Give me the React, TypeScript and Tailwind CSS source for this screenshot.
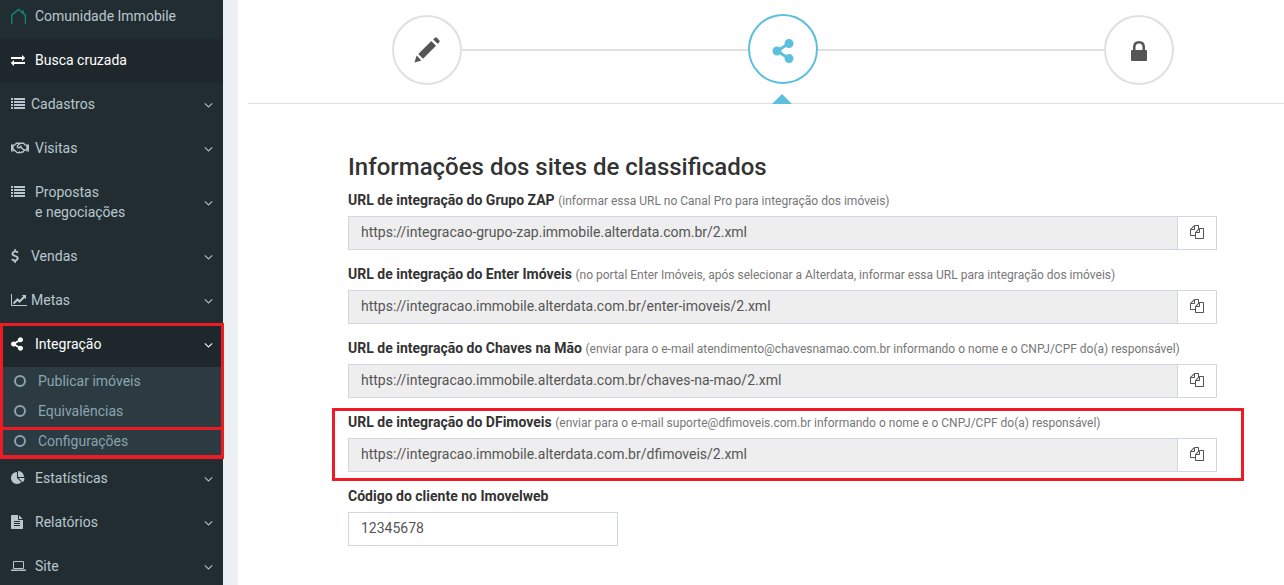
import type { ReactNode } from 'react';
import { FaRegHandshake, FaShareAlt } from 'react-icons/fa';

type GlyphProps = { d: string; w: number; className: string };

function Glyph({ d, w, className }: GlyphProps) {
  return (
    <svg viewBox={`0 0 ${w} 1792`} className={className} fill="currentColor" aria-hidden="true">
      <path d={d} />
    </svg>
  );
}

const EXCHANGE =
  'M1792 1184v192q0 13-9.5 22.5t-22.5 9.5h-1376v192q0 13-9.5 22.5t-22.5 9.5q-12 0-24-10l-319-320q-9-9-9-22 0-14 9-23l320-320q9-9 23-9 13 0 22.5 9.5t9.5 22.5v192h1376q13 0 22.5 9.5t9.5 22.5zm0-544q0 14-9 23l-320 320q-9 9-23 9-13 0-22.5-9.5t-9.5-22.5v-192h-1376q-13 0-22.5-9.5t-9.5-22.5v-192q0-13 9.5-22.5t22.5-9.5h1376v-192q0-14 9-23t23-9q12 0 24 10l319 319q9 9 9 23z';
const LIST =
  'M0 128h256v256h-256zM384 128h1408v256h-1408zM0 512h256v256h-256zM384 512h1408v256h-1408zM0 896h256v256h-256zM384 896h1408v256h-1408zM0 1280h256v256h-256zM384 1280h1408v256h-1408z';
const DOLLAR =
  'M1362 1185q0 153-99.5 263.5t-258.5 136.5v175q0 14-9 23t-23 9h-135q-13 0-22.5-9.5t-9.5-22.5v-175q-66-9-127.5-31t-101.5-44.5-74-48-46.5-37.5-17.5-18q-17-21-2-41l103-135q7-10 23-12 15-2 24 9l2 2q113 99 243 125 37 8 74 8 81 0 142.5-43t61.5-122q0-28-15-53t-33.5-42-58.5-37.5-66-32-80-32.5q-39-16-61.5-25t-61.5-26.5-62.5-31-56.5-35.5-53.5-42.5-43.5-49-35.5-58-21-66.5-8.5-78q0-138 98-242t255-134v-180q0-13 9.5-22.5t22.5-9.5h135q14 0 23 9t9 23v176q57 6 110.5 23t87 33.5 63.5 37.5 39 29 15 14q17 18 5 38l-81 146q-8 15-23 16-14 3-27-7-3-3-14.5-12t-39-26.5-58.5-32-74.5-26-85.5-11.5q-95 0-155 43t-60 111q0 26 8.5 48t29.5 41.5 39.5 33 56 31 60.5 27 70 27.5q53 20 81 31.5t76 35 75.5 42.5 62 50 53 63.5 31.5 76.5 13 94z';
const LINE_CHART =
  'M2048 1536v128h-2048v-1536h128v1408h1920zm-128-1248v435q0 21-19.5 29.5t-35.5-7.5l-121-121-633 633q-10 10-23 10t-23-10l-233-233-416 416-192-192 585-585q10-10 23-10t23 10l233 233 464-464-121-121q-16-16-7.5-35.5t29.5-19.5h435q14 0 23 9t9 23z';
const PIE =
  'M768 890l546 546q-106 108-247.5 168t-298.5 60q-209 0-385.5-103t-279.5-279.5-103-385.5 103-385.5 279.5-279.5 385.5-103v762zm187 6h773q0 157-60 298.5t-168 247.5zm709-128h-768v-768q209 0 385.5 103t279.5 279.5 103 385.5z';
const FILE =
  'M1468 476q14 14 28 36h-472v-472q22 14 36 28zm-476 164h544v1056q0 40-28 68t-68 28h-1344q-40 0-68-28t-28-68v-1600q0-40 28-68t68-28h800v544q0 40 28 68t68 28zm160 736v-64q0-14-9-23t-23-9h-704q-14 0-23 9t-9 23v64q0 14 9 23t23 9h704q14 0 23-9t9-23zm0-256v-64q0-14-9-23t-23-9h-704q-14 0-23 9t-9 23v64q0 14 9 23t23 9h704q14 0 23-9t9-23zm0-256v-64q0-14-9-23t-23-9h-704q-14 0-23 9t-9 23v64q0 14 9 23t23 9h704q14 0 23-9t9-23z';
const LAPTOP =
  'M416 1280q-66 0-113-47t-47-113v-704q0-66 47-113t113-47h1088q66 0 113 47t47 113v704q0 66-47 113t-113 47h-1088zm-32-864v704q0 13 9.5 22.5t22.5 9.5h1088q13 0 22.5-9.5t9.5-22.5v-704q0-13-9.5-22.5t-22.5-9.5h-1088q-13 0-22.5 9.5t-9.5 22.5zm1376 928h160v96q0 40-47 68t-113 28h-1600q-66 0-113-28t-47-68v-96h1760zm-720 96q16 0 16-16t-16-16h-160q-16 0-16 16t16 16h160z';
const ANGLE_DOWN =
  'M1075 736q0 13-10 23l-466 466q-10 10-23 10t-23-10l-466-466q-10-10-10-23t10-23l50-50q10-10 23-10t23 10l393 393 393-393q10-10 23-10t23 10l50 50q10 10 10 23z';
const FILES =
  'M1696 384q40 0 68 28t28 68v1216q0 40-28 68t-68 28h-960q-40 0-68-28t-28-68v-288h-544q-40 0-68-28t-28-68v-672q0-40 20-88t48-76l408-408q28-28 76-48t88-20h416q40 0 68 28t28 68v328q68-40 128-40h416zm-544 213l-299 299h299v-299zm-640-384l-299 299h299v-299zm196 647l316-316v-416h-384v416q0 40-28 68t-68 28h-416v640h512v-256q0-40 20-88t48-76zm956 804v-1152h-384v416q0 40-28 68t-68 28h-416v640h896z';

function HouseIcon() {
  return (
    <svg viewBox="0 0 16 16" className="h-4 w-4 text-[#12857a]" fill="none" stroke="currentColor" strokeWidth="1.4" aria-hidden="true">
      <path d="M0.7 15.7V7.2L7.5 1.5L14.4 7.2V15.7M12.3 5.2V2.6" />
    </svg>
  );
}

type ItemProps = {
  icon: ReactNode;
  label: ReactNode;
  wide?: boolean;
  active?: boolean;
  arrow?: boolean;
  pad?: string;
};

function MenuItem({ icon, label, wide = true, active = false, arrow = true, pad = 'pt-[11px] pb-[13px]' }: ItemProps) {
  return (
    <li>
      <a
        href="#"
        className={`flex pl-[11px] pr-2.5 ${pad} ${active ? 'bg-[#1e282c] text-white' : 'text-[#b8c7ce]'}`}
      >
        <span className={`flex h-5 shrink-0 items-center ${wide ? 'w-6' : 'w-5'}`}>{icon}</span>
        <span className="flex-1">{label}</span>
        {arrow && (
          <span className="flex items-center pt-0.5">
            <Glyph d={ANGLE_DOWN} w={1152} className="h-3.5 w-[9px]" />
          </span>
        )}
      </a>
    </li>
  );
}

function SubItem({ label }: { label: string }) {
  return (
    <li>
      <a href="#" className="flex h-[30px] items-center pb-0.5 pl-3.5 text-[#8aa4af]">
        <svg viewBox="0 0 12 12" className="mr-3 h-3 w-3" fill="none" stroke="currentColor" strokeWidth="2" aria-hidden="true">
          <circle cx="6" cy="6" r="5" />
        </svg>
        {label}
      </a>
    </li>
  );
}

function Sidebar() {
  return (
    <nav className="w-[223px] shrink-0 bg-[#222d32]">
      <ul>
        <MenuItem icon={<HouseIcon />} label="Comunidade Immobile" arrow={false} pad="pt-1.5 pb-[13px]" />
        <MenuItem icon={<Glyph d={EXCHANGE} w={1792} className="h-3.5 w-3.5" />} label="Busca cruzada" arrow={false} active />
        <MenuItem icon={<Glyph d={LIST} w={1792} className="h-3.5 w-3.5" />} label="Cadastros" wide={false} />
        <MenuItem icon={<FaRegHandshake className="h-[18px] w-[18px] shrink-0" />} label="Visitas" />
        <MenuItem
          icon={<Glyph d={LIST} w={1792} className="h-3.5 w-3.5" />}
          label={<>Propostas<br />e negociações</>}
        />
        <MenuItem icon={<Glyph d={DOLLAR} w={1792} className="-ml-[3px] h-3.5 w-3.5" />} label="Vendas" wide={false} />
        <MenuItem icon={<Glyph d={LINE_CHART} w={2048} className="h-3.5 w-4" />} label="Metas" wide={false} />
        <li className="relative">
          <ul>
            <MenuItem icon={<FaShareAlt className="h-3.5 w-3" />} label="Integração" active />
          </ul>
          <ul className="bg-[#2c3b41]">
            <SubItem label="Publicar imóveis" />
            <SubItem label="Equivalências" />
            <SubItem label="Configurações" />
          </ul>
          <div className="pointer-events-none absolute -right-px -bottom-px left-0 top-0 border-3 border-[#ed1c24]" />
          <div className="pointer-events-none absolute -right-px -bottom-0.5 left-0 h-8 border-3 border-[#ed1c24]" />
        </li>
        <MenuItem icon={<Glyph d={PIE} w={1792} className="h-3.5 w-3.5" />} label="Estatísticas" />
        <MenuItem icon={<Glyph d={FILE} w={1536} className="h-3.5 w-3" />} label="Relatórios" />
        <MenuItem icon={<Glyph d={LAPTOP} w={1920} className="h-3.5 w-[15px]" />} label="Site" pad="pt-[11px] pb-[9px]" />
      </ul>
    </nav>
  );
}

const STEP = 'flex h-[70px] w-[70px] shrink-0 items-center justify-center rounded-full border-2 bg-white';

function Steps() {
  return (
    <div className="ml-2.5 flex h-[104px] items-start border-b border-[#e0e0e0] pl-36 pr-[110px] pt-[15px]">
      <button type="button" aria-label="Dados" className={`${STEP} border-[#e0e0e0] text-[#555555]`}>
        <svg viewBox="0 0 26 26" className="h-[26px] w-[26px]" fill="currentColor" aria-hidden="true">
          <path d="M0.5 25.5L2.6 18.6L7.4 23.4ZM4.3 17L16.8 4.5Q17.3 4 17.8 4.5L21.5 8.2Q22 8.7 21.5 9.2L9 21.7ZM19.2 2.4L20.8 0.8Q21.8 -0.1 22.8 0.8L25.2 3.2Q26.1 4.2 25.2 5.2L23.6 6.8Z" />
        </svg>
      </button>
      <div className="mt-[34px] h-0.5 flex-1 bg-[#e0e0e0]" />
      <div className="relative -mt-px">
        <button type="button" aria-label="Integração" aria-current="step" className={`${STEP} border-[#5bc0de] text-[#5bc0de]`}>
          <FaShareAlt className="mt-1 h-6 w-[22px]" />
        </button>
        <svg viewBox="0 0 20 10" className="absolute left-6 top-20 h-2.5 w-5" fill="#5bc0de" aria-hidden="true">
          <path d="M0 10L10 0L20 10Z" />
        </svg>
      </div>
      <div className="mt-[34px] h-0.5 flex-1 bg-[#e0e0e0]" />
      <button type="button" aria-label="Concluir" className={`${STEP} border-[#e0e0e0] text-[#555555]`}>
        <svg viewBox="0 0 16 20" className="mt-0.5 h-5 w-4" fill="currentColor" aria-hidden="true">
          <path fillRule="evenodd" d="M1 9H2V6Q2 0 8 0T14 6V9H15Q16 9 16 10V19Q16 20 15 20H1Q0 20 0 19V10Q0 9 1 9ZM4.5 9H11.5V6.2Q11.5 2.4 8 2.4T4.5 6.2Z" />
        </svg>
      </button>
    </div>
  );
}

type Field = { id: string; label: string; hint: string; url: string; marked?: boolean };

const FIELDS: Field[] = [
  {
    id: 'zap',
    label: 'URL de integração do Grupo ZAP',
    hint: '(informar essa URL no Canal Pro para integração dos imóveis)',
    url: 'https://integracao-grupo-zap.immobile.alterdata.com.br/2.xml',
  },
  {
    id: 'enter',
    label: 'URL de integração do Enter Imóveis',
    hint: '(no portal Enter Imóveis, após selecionar a Alterdata, informar essa URL para integração dos imóveis)',
    url: 'https://integracao.immobile.alterdata.com.br/enter-imoveis/2.xml',
  },
  {
    id: 'chaves',
    label: 'URL de integração do Chaves na Mão',
    hint: '(enviar para o e-mail atendimento@chavesnamao.com.br informando o nome e o CNPJ/CPF do(a) responsável)',
    url: 'https://integracao.immobile.alterdata.com.br/chaves-na-mao/2.xml',
  },
  {
    id: 'df',
    label: 'URL de integração do DFimoveis',
    hint: '(enviar para o e-mail suporte@dfimoveis.com.br informando o nome e o CNPJ/CPF do(a) responsável)',
    url: 'https://integracao.immobile.alterdata.com.br/dfimoveis/2.xml',
    marked: true,
  },
];

function UrlField({ field }: { field: Field }) {
  return (
    <div className="relative">
      <label htmlFor={field.id} className="mb-1.5 block font-bold text-[#333333]">
        {field.label} <small className="text-xs font-normal text-[#777777]">{field.hint}</small>
      </label>
      <div className="flex">
        <input
          id={field.id}
          readOnly
          defaultValue={field.url}
          className="h-[34px] min-w-0 flex-1 border border-[#d2d6de] bg-[#eeeeee] px-3 pb-0.5 text-[#555555] outline-none"
        />
        <button
          type="button"
          aria-label={`Copiar ${field.label}`}
          className="-ml-px flex h-[34px] w-10 items-center justify-center border border-[#d2d6de] bg-white pb-0.5 text-[#555555]"
        >
          <Glyph d={FILES} w={1792} className="h-3.5 w-3.5" />
        </button>
      </div>
      {field.marked && (
        <div className="pointer-events-none absolute -bottom-[9px] -left-4 -right-[27px] -top-1 border-3 border-[#ed1c24]" />
      )}
    </div>
  );
}

export default function App() {
  return (
    <div className="flex min-h-screen bg-[#ecf0f5] font-[Roboto,'Liberation_Sans',sans-serif] text-sm leading-5">
      <Sidebar />
      <main className="ml-[15px] min-w-0 flex-1 bg-white">
        <Steps />
        <form className="flex flex-col gap-3.5 pl-[110px] pr-[67px] pt-12">
          <h3 className="-mb-1.5 text-2xl leading-[30px] font-medium text-[#333333]">Informações dos sites de classificados</h3>
          {FIELDS.map((f) => (
            <UrlField key={f.id} field={f} />
          ))}
          <div>
            <label htmlFor="codigo" className="mb-1.5 block font-bold text-[#333333]">
              Código do cliente no Imovelweb
            </label>
            <input
              id="codigo"
              defaultValue="12345678"
              className="h-[34px] w-[270px] border border-[#d2d6de] bg-white px-3 pb-0.5 text-[#555555] outline-none"
            />
          </div>
        </form>
      </main>
    </div>
  );
}
